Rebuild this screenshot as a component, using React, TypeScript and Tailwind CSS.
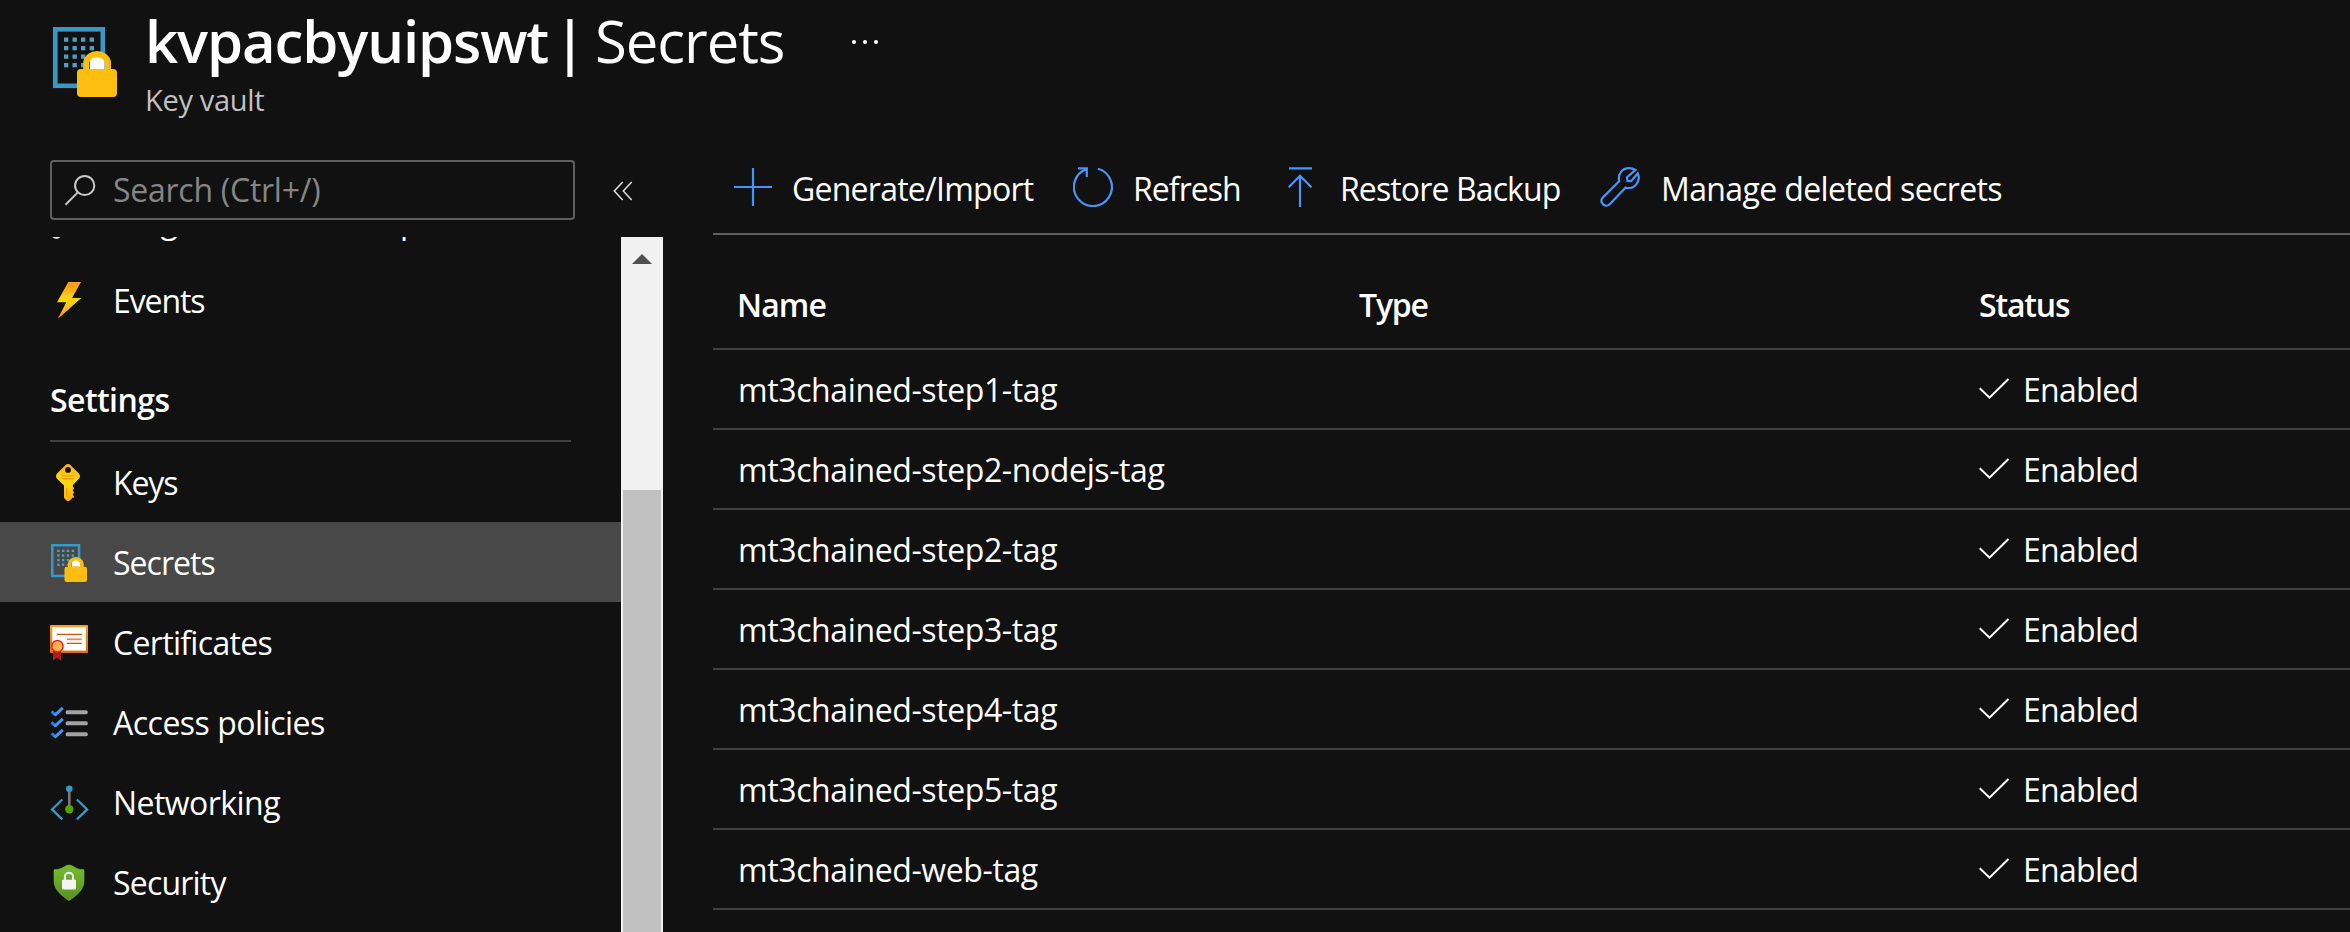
import React from "react";

function VaultIcon({ className }: { className: string }) {
  const cols = [11, 19.5, 28, 36.7];
  const rows = [10.5, 19, 27.5, 36];
  return (
    <svg className={className} viewBox="0 0 64 70" preserveAspectRatio="none">
      <rect x="2.3" y="2.3" width="47.5" height="56.5" fill="none" stroke="#3999c6" strokeWidth="4.6" />
      {rows.map((y) =>
        cols.map((x) => <rect key={`${x}-${y}`} x={x} y={y} width="4.3" height="4.3" fill="#4fa0bf" />),
      )}
      <path d="M37 42V34a7.3 7.3 0 0 1 14.5 0v8z" fill="#fff" />
      <path d="M33.3 44V35.5a10.9 9.6 0 0 1 21.6 0V44" fill="none" stroke="#fdbe10" strokeWidth="6.2" />
      <rect x="24" y="42" width="40" height="28" rx="4" fill="#fdbe10" />
    </svg>
  );
}

function Icon38({ children }: { children: React.ReactNode }) {
  return (
    <svg className="h-[38px] w-[38px] shrink-0 overflow-visible" viewBox="0 0 38 38" fill="none">
      {children}
    </svg>
  );
}

const DiagnoseIcon = (
  <Icon38>
    <path d="M6.5 32.2 26 12" stroke="#f2f2f2" strokeWidth="11" strokeLinecap="round" />
  </Icon38>
);

const EventsIcon = (
  <Icon38>
    <defs>
      <linearGradient id="bolt" x1="0" y1="0" x2="0" y2="1">
        <stop offset="0.1" stopColor="#ff9d1e" />
        <stop offset="0.45" stopColor="#ffd70f" />
        <stop offset="0.6" stopColor="#ffcb12" />
        <stop offset="1" stopColor="#ff921f" />
      </linearGradient>
    </defs>
    <path d="M18.3 1H31L22 17h9.3L7.7 38l8.6-16.7H7z" fill="url(#bolt)" />
  </Icon38>
);

const KeysIcon = (
  <Icon38>
    <defs>
      <linearGradient id="key" x1="0" y1="0" x2="0" y2="1">
        <stop offset="0" stopColor="#ffb01a" />
        <stop offset="0.45" stopColor="#ffd70f" />
        <stop offset="0.65" stopColor="#ffcf10" />
        <stop offset="1" stopColor="#ffa41a" />
      </linearGradient>
    </defs>
    <path
      fillRule="evenodd"
      d="M15.4 2.2q2.6-2.4 5.2 0l8.3 8.2q2.2 2.6 0 5.4l-6 6.2v2.2h1v2h-1v2.2h1v2h-1v2.2h1v2h-1L19.8 37.5q-1.8 1.4-3.4 0L14 35V22.4L7 15.8q-2-2.7 0-5.4zM18 4a2.9 2.9 0 1 0 0 5.8a2.9 2.9 0 0 0 0-5.800z"
      fill="url(#key)"
    />
    <path d="M12 12.8h12M12 15.8h12" stroke="#ff9d16" strokeWidth="1.5" />
    <path d="M16.6 25v8" stroke="#ff9d16" strokeWidth="1.2" />
  </Icon38>
);

const CertificatesIcon = (
  <Icon38>
    <defs>
      <linearGradient id="cert" x1="0" y1="0" x2="0" y2="1">
        <stop offset="0" stopColor="#ffa11c" />
        <stop offset="1" stopColor="#dd6f08" />
      </linearGradient>
    </defs>
    <rect x="0" y="2" width="38" height="28" rx="1" fill="url(#cert)" />
    <rect x="2.2" y="4.2" width="33.6" height="23.4" fill="#fff" />
    <path d="M7 11.3h25M17 20.4h14.7" stroke="#d15900" strokeWidth="1.3" />
    <path d="M17 16.3h14.7" stroke="#e58a50" strokeWidth="1.8" />
    <path d="M3 27v10.5l4-2.8 4 2.8V27z" fill="#b31b1b" />
    <circle cx="7.4" cy="23.3" r="5.7" fill="#ffb34d" stroke="#e62323" strokeWidth="1.5" />
  </Icon38>
);

const AccessIcon = (
  <Icon38>
    {[0, 11, 22].map((dy) => (
      <g key={dy} transform={`translate(0 ${dy})`}>
        <path d="M1.5 8.3 5.7 12" stroke="#1a7fe0" strokeWidth="3" />
        <path d="M4.7 12.3 12.8 4.8" stroke="#4593ee" strokeWidth="3" />
        <rect x="15.7" y="7.2" width="22" height="4" rx="1.5" fill="#a3a3a3" />
      </g>
    ))}
  </Icon38>
);

const NetworkingIcon = (
  <Icon38>
    <path d="M19.3 7v18" stroke="#7a7a7a" strokeWidth="2.6" />
    <circle cx="19.3" cy="5.7" r="3.3" fill="#3999c6" />
    <circle cx="19.3" cy="26.3" r="4.2" fill="#57a300" />
    <path d="M12.3 16.5 2 26.4l10.3 10M26.9 16.5l10.3 9.900-10.3 10" stroke="#3999c6" strokeWidth="2.2" />
  </Icon38>
);

const SecurityIcon = (
  <Icon38>
    <defs>
      <linearGradient id="shield" x1="0" y1="0" x2="0" y2="1">
        <stop offset="0" stopColor="#76bc2d" />
        <stop offset="1" stopColor="#579120" />
      </linearGradient>
    </defs>
    <path
      d="M19 2c4.5 0 6 4.6 14.2 4.6Q34 6.6 34 7.5V18c0 9-8 15-15 19.5C12 33 4 27 4 18V7.5q0-.9.8-.9C13 6.6 14.5 2 19 2z"
      fill="url(#shield)"
      stroke="#76bc2d"
      strokeWidth="0.6"
    />
    <path d="M14.9 17.5v-3.7a4.1 4.1 0 0 1 8.2 0v3.7" stroke="#fff" strokeWidth="2" />
    <rect x="12" y="16.7" width="14" height="9.8" rx="0.6" fill="#f3f3f3" />
  </Icon38>
);

type NavItem = { label: string; icon: React.ReactNode; track: string; selected?: boolean };

const topItems: NavItem[] = [
  { label: "Diagnose and solve problems", icon: DiagnoseIcon, track: "tracking-[-0.52px]" },
  { label: "Events", icon: EventsIcon, track: "tracking-[-1.1px]" },
];

const settingsItems: NavItem[] = [
  { label: "Keys", icon: KeysIcon, track: "tracking-[-1.1px]" },
  {
    label: "Secrets",
    icon: <VaultIcon className="ml-[1px] mr-[1px] mt-[2px] h-[38px] w-[36px] shrink-0" />,
    track: "tracking-[-0.98px]",
    selected: true,
  },
  { label: "Certificates", icon: CertificatesIcon, track: "tracking-[-0.68px]" },
  { label: "Access policies", icon: AccessIcon, track: "tracking-[-0.5px]" },
  { label: "Networking", icon: NetworkingIcon, track: "tracking-[-0.55px]" },
  { label: "Security", icon: SecurityIcon, track: "tracking-[-0.8px]" },
];

function NavRow({ item }: { item: NavItem }) {
  return (
    <li
      className={`flex h-[80px] shrink-0 items-center gap-[25px] whitespace-nowrap pl-[50px] ${
        item.selected ? "bg-[#484848]" : ""
      }`}
    >
      {item.icon}
      <span className={`pt-[1px] ${item.track}`}>{item.label}</span>
    </li>
  );
}

const tool = "h-10 w-10 shrink-0";
const stroke = { fill: "none", stroke: "#4894fe", strokeWidth: 2.2 };

const actions = [
  {
    label: "Generate/Import",
    cls: "w-[340px] gap-[19px] tracking-[-0.75px]",
    icon: (
      <svg className={tool} viewBox="0 0 40 40" {...stroke}>
        <path d="M20 1v38M1 20h38" />
      </svg>
    ),
  },
  {
    label: "Refresh",
    cls: "w-[207px] gap-[20px] tracking-[-0.95px]",
    icon: (
      <svg className={tool} viewBox="0 0 40 40" {...stroke}>
        <path d="M25 1.7A19 19 0 1 1 13.5 2.1" />
        <path d="M5 1.3h8.8V10" />
      </svg>
    ),
  },
  {
    label: "Restore Backup",
    cls: "w-[320px] gap-[20px] tracking-[-0.88px]",
    icon: (
      <svg className={tool} viewBox="0 0 40 40" {...stroke}>
        <path d="M9 1.3h23M20 40V8.5M8.7 20.2 20 8.7l11.5 11.500" />
      </svg>
    ),
  },
  {
    label: "Manage deleted secrets",
    cls: "gap-[21px] tracking-[-0.63px]",
    icon: (
      <svg className={tool} viewBox="0 0 40 40" {...stroke}>
        <path d="M2.7 30.6 19.2 14.2C17.5 7.5 22 1.2 29 1.2c2.5 0 4.6.5 6.5 1.7l-8.6 7.6.6 3.4 3.6.3L37.8 6.3C40.8 13.5 36 22 27 21l-1.3-.4L9.7 37.2c-4 4.3-11-1.6-7-6.600z" />
      </svg>
    ),
  },
];

const secrets = [
  "mt3chained-step1-tag",
  "mt3chained-step2-nodejs-tag",
  "mt3chained-step2-tag",
  "mt3chained-step3-tag",
  "mt3chained-step4-tag",
  "mt3chained-step5-tag",
  "mt3chained-web-tag",
];

export default function App() {
  return (
    <div className="flex h-[932px] w-[2350px] flex-col overflow-hidden bg-[#111111] font-['Open_Sans','Noto_Sans',sans-serif] text-[32px] leading-[40px] text-white">
      <header className="flex h-[160px] shrink-0">
        <VaultIcon className="ml-[53px] mt-[27px] h-[70px] w-[64px] shrink-0" />
        <div className="ml-[28px] whitespace-nowrap">
          <h1 className="flex h-[80px] pt-[1px] text-[58px] leading-[80px]">
            <span className="w-[409px] font-semibold tracking-[-1.1px]">kvpacbyuipswt</span>
            <span className="w-[41px] font-semibold">|</span>
            <span className="w-[254px] tracking-[-1.05px]">Secrets</span>
            <svg className="mt-[35px] h-[12px] w-[32px]" viewBox="0 0 32 12" fill="#fff">
              <circle cx="5" cy="6" r="2" />
              <circle cx="16" cy="6" r="2" />
              <circle cx="27" cy="6" r="2" />
            </svg>
          </h1>
          <p className="text-[29px] leading-[40px] tracking-[-0.32px] text-[#c0c0c0]">Key vault</p>
        </div>
      </header>

      <div className="flex min-h-0 flex-1">
        <aside className="flex w-[663px] shrink-0 flex-col">
          <div className="flex h-[77px] shrink-0 items-start pl-[50px]">
            <div className="flex h-[60px] w-[525px] items-center rounded-[4px] border-2 border-[#5f5f5f] pl-[12px]">
              <svg className="h-8 w-8" viewBox="0 0 32 32" fill="none" stroke="#c8c8c8" strokeWidth="2">
                <circle cx="20.7" cy="11.5" r="9.6" />
                <path d="M13.8 18.4 1.5 30.7" />
              </svg>
              <span className="ml-[17px] mt-[-1px] tracking-[-0.26px] text-[#858585]">Search (Ctrl+/)</span>
            </div>
            <svg
              className="ml-[38px] mt-[21px] h-5 w-5"
              viewBox="0 0 20 20"
              fill="none"
              stroke="#e0e0e0"
              strokeWidth="1.5"
            >
              <path d="M9.7 1 1.3 10l8.4 9M18.7 1l-8.4 9 8.4 9" />
            </svg>
          </div>

          <div className="flex min-h-0 flex-1">
            <nav className="min-w-0 flex-1 overflow-hidden">
              <ul className="-mt-[57px]">
                {topItems.map((i) => (
                  <NavRow key={i.label} item={i} />
                ))}
              </ul>
              <h2 className="ml-[50px] mr-[50px] h-[102px] border-b-2 border-[#404040] pt-[40px] font-semibold tracking-[-0.56px]">
                Settings
              </h2>
              <ul>
                {settingsItems.map((i) => (
                  <NavRow key={i.label} item={i} />
                ))}
              </ul>
            </nav>
            <div className="flex w-[42px] shrink-0 flex-col items-center bg-[#f1f1f1]">
              <svg className="mt-[17px] h-[10px] w-5 shrink-0" viewBox="0 0 20 10">
                <path d="M10 0l10 10H0z" fill="#505050" />
              </svg>
              <div className="mt-[226px] w-[38px] flex-1 bg-[#c1c1c1]" />
            </div>
          </div>
        </aside>

        <main className="ml-[50px] min-w-0 flex-1 whitespace-nowrap">
          <div className="flex h-[75px] border-b-2 border-[#5f5f5f] pl-[20px] pt-[7px]">
            {actions.map((a) => (
              <div key={a.label} className={`flex h-10 shrink-0 items-center ${a.cls}`}>
                {a.icon}
                <span className="pt-[4px]">{a.label}</span>
              </div>
            ))}
          </div>
          <div className="flex h-[115px] border-b-2 border-[#404040] pl-[24px] pt-[50px] font-semibold">
            <span className="w-[622px] tracking-[-0.91px]">Name</span>
            <span className="w-[620px] tracking-[-1.17px]">Type</span>
            <span className="tracking-[-1.15px]">Status</span>
          </div>
          {secrets.map((name) => (
            <div key={name} className="flex h-[80px] items-center border-b-2 border-[#404040] pl-[25px]">
              <span className="w-[1240px] pt-[1px] tracking-[-0.39px]">{name}</span>
              <svg className="h-8 w-8" viewBox="0 0 32 32" fill="none" stroke="#fff" strokeWidth="2">
                <path d="M1.7 15.2 11.5 24.7 30.5 6" />
              </svg>
              <span className="ml-[13px] pt-[1px] tracking-[-0.7px]">Enabled</span>
            </div>
          ))}
        </main>
      </div>
    </div>
  );
}
